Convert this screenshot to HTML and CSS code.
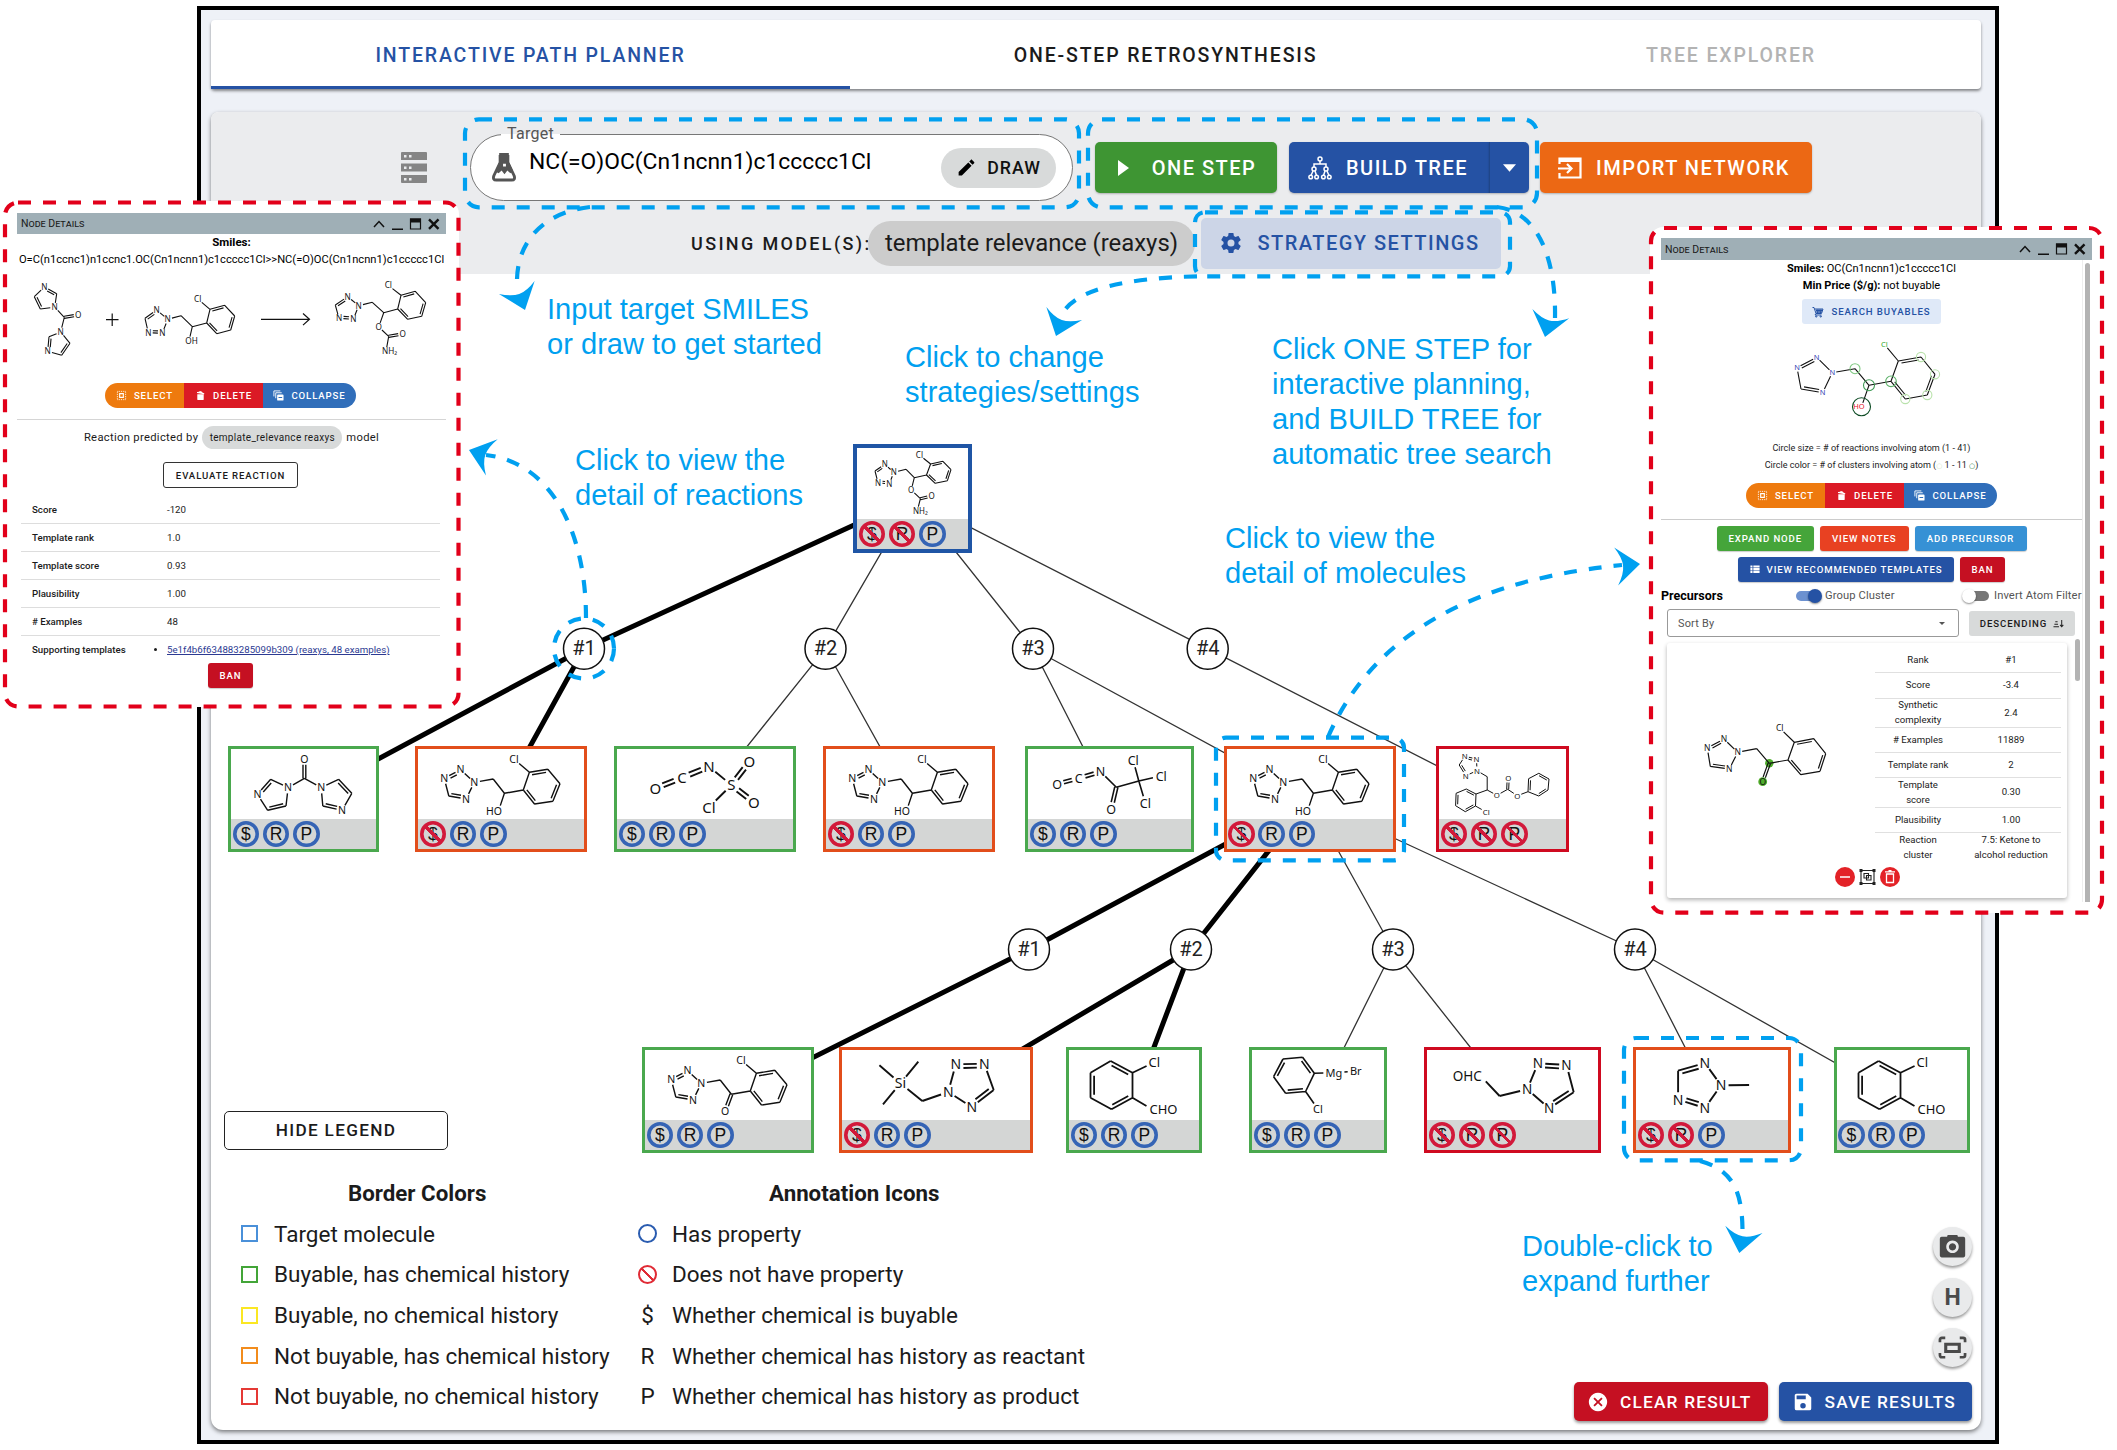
FILE: index.html
```html
<!DOCTYPE html>
<html lang="en">
<head>
<meta charset="utf-8">
<title>Interactive Path Planner</title>
<link rel="stylesheet" href="styles.css">
</head>
<body>
<svg class="defs" width="0" height="0">
  <symbol id="i-select" viewBox="0 0 24 24"><path d="M3 3h18v18H3z" fill="none" stroke="currentColor" stroke-width="2" stroke-dasharray="2 2"/><path d="M8 8h8v8H8z" fill="none" stroke="currentColor" stroke-width="2.4"/></symbol>
  <symbol id="i-trash" viewBox="0 0 24 24"><path d="M5 9h14v11a2 2 0 0 1-2 2H7a2 2 0 0 1-2-2zM4.500 4.500l4.500-.8 1.500-1.500 4 .9 1 1.900 5 2.500-.6 1.700L4.200 6.300z" fill="currentColor"/></symbol>
  <symbol id="i-collapse" viewBox="0 0 24 24"><path d="M2 14V2h14M6 18V6h13" fill="none" stroke="currentColor" stroke-width="2"/><path fill-rule="evenodd" fill="currentColor" d="M11 10h10a2 2 0 0 1 2 2v9a2 2 0 0 1-2 2H11a2 2 0 0 1-2-2v-9a2 2 0 0 1 2-2zm1 5.500v2h8v-2z"/></symbol>
  <symbol id="i-window" viewBox="0 0 70 14"><path d="M2 10l5-5.500 5 5.500M20 12.200h11" fill="none" stroke="#111" stroke-width="1.500"/><path d="M38.500 2h10v10h-10z" fill="none" stroke="#111" stroke-width="1.200"/><path d="M38 1.500h11v4H38z" fill="#111"/><path d="M57 2.300l9.500 9.500M66.500 2.300L57 11.800" stroke="#111" stroke-width="2.400"/></symbol>
  <symbol id="i-head" viewBox="-20 -26 40 27" overflow="visible"><path d="M0 0L-19-24Q-8-17 0-17Q8-17 19-24Z" fill="#00a0f0"/></symbol>
</svg>

<main class="figure">
  <section class="app">
    <nav class="tabs">
      <a class="tab tab-plan">INTERACTIVE PATH PLANNER</a>
      <a class="tab tab-step">ONE-STEP RETROSYNTHESIS</a>
      <a class="tab tab-tree">TREE EXPLORER</a>
    </nav>
    <div class="card">
      <header class="toolbar">
        <div class="bar-main">
          <svg class="server" viewBox="0 0 26 32"><path fill-rule="evenodd" fill="#858585" d="M1 0h24a1 1 0 0 1 1 1v7H0V1a1 1 0 0 1 1-1zm2 3v2.500h2.500V3zm5 0v2.500h2.500V3zM0 11.500h26v8H0zm3 3V17h2.500v-2.500zm5 0V17h2.500v-2.500zM0 23h26v7a1 1 0 0 1-1 1H1a1 1 0 0 1-1-1zm3 3v2.500h2.500V26zm5 0v2.500h2.500V26z"/></svg>
          <div class="target">
            <span class="target-label">Target</span>
            <svg class="flask" viewBox="0 0 26 30"><path d="M9 2v8L2.500 23.500Q1 28 5 28h16q4 0 2.500-4.500L17 10V2" fill="none" stroke="#555" stroke-width="3"/><path fill-rule="evenodd" fill="#555" d="M8 0h10v9l4.500 9.500-3 2.500-3-3-3 4-3-4-3 3-3-1.500L8 9zm4 11v3h3v-3z"/></svg>
            <span class="smiles">NC(=O)OC(Cn1ncnn1)c1ccccc1Cl</span>
            <button class="draw"><svg viewBox="0 0 24 24"><path d="M20.710 7.040C21.100 6.650 21.100 6 20.710 5.630L18.370 3.290C18 2.900 17.350 2.900 16.960 3.290L15.120 5.120L18.870 8.870M3 17.250V21H6.750L17.810 9.930L14.060 6.180Z"/></svg><span>DRAW</span></button>
          </div>
          <button class="btn one"><svg viewBox="0 0 24 24"><path fill="#fff" d="M7 4v16l11-8z"/></svg><span>ONE STEP</span></button>
          <button class="btn build"><svg viewBox="0 0 24 24" fill="none" stroke="#fff" stroke-width="1.500"><circle cx="12" cy="3" r="2"/><circle cx="6" cy="13" r="2"/><circle cx="18" cy="13" r="2"/><circle cx="2.700" cy="21" r="1.800"/><circle cx="8.600" cy="21" r="1.800"/><circle cx="15.400" cy="21" r="1.800"/><circle cx="21.300" cy="21" r="1.800"/><path d="M12 5v3M6 11V8h12v3M5 15l-2 4.500M7 15l1.500 4.500M17 15l-1.500 4.500M19 15l2 4.500"/></svg><span>BUILD TREE</span></button>
          <button class="btn drop"><svg viewBox="0 0 14 8"><path fill="#fff" d="M0 0h14L7 8z"/></svg></button>
          <button class="btn import"><svg viewBox="0 0 24 22" fill="none" stroke="#fff"><path stroke-width="2.200" d="M1.500 7V1.500h21v19h-21V16"/><path stroke-width="4" d="M1 3h22"/><path stroke-width="2.200" d="M0 11.500h13M9 7l4.500 4.500L9 16"/></svg><span>IMPORT NETWORK</span></button>
        </div>
        <div class="bar-model">
          <span class="using">USING MODEL(S):</span>
          <span class="chip">template relevance (reaxys)</span>
          <button class="strategy"><svg viewBox="0 0 24 24"><path fill="#2552a4" fill-rule="evenodd" d="M12 15.500A3.500 3.500 0 0 1 8.500 12A3.500 3.500 0 0 1 12 8.500A3.500 3.500 0 0 1 15.500 12A3.500 3.500 0 0 1 12 15.500M19.430 12.970C19.470 12.650 19.500 12.330 19.500 12C19.500 11.670 19.470 11.340 19.430 11L21.540 9.370C21.730 9.220 21.780 8.950 21.660 8.730L19.660 5.270C19.540 5.050 19.270 4.960 19.050 5.050L16.560 6.050C16.040 5.660 15.500 5.320 14.870 5.070L14.500 2.420C14.460 2.180 14.250 2 14 2H10C9.750 2 9.540 2.180 9.500 2.420L9.130 5.070C8.500 5.320 7.960 5.660 7.440 6.050L4.950 5.050C4.730 4.960 4.460 5.050 4.340 5.270L2.340 8.730C2.210 8.950 2.270 9.220 2.460 9.370L4.570 11C4.530 11.340 4.500 11.670 4.500 12C4.500 12.330 4.530 12.650 4.570 12.970L2.460 14.630C2.270 14.780 2.210 15.050 2.340 15.270L4.340 18.730C4.460 18.950 4.730 19.030 4.950 18.950L7.440 17.940C7.960 18.340 8.500 18.680 9.130 18.930L9.500 21.580C9.540 21.820 9.750 22 10 22H14C14.250 22 14.460 21.820 14.500 21.580L14.870 18.930C15.500 18.670 16.040 18.340 16.560 17.940L19.050 18.950C19.270 19.030 19.540 18.950 19.660 18.730L21.660 15.270C21.780 15.050 21.730 14.780 21.540 14.630Z"/></svg><span>STRATEGY SETTINGS</span></button>
        </div>
      </header>
      <footer class="bottom">
        <div class="legend">
          <button class="hide">HIDE LEGEND</button>
          <div class="legend-cols">
            <div class="lcol lcol-a">
              <h2>Border Colors</h2>
              <p><i class="sq c-blue"></i>Target molecule</p>
              <p><i class="sq c-green"></i>Buyable, has chemical history</p>
              <p><i class="sq c-yellow"></i>Buyable, no chemical history</p>
              <p><i class="sq c-orange"></i>Not buyable, has chemical history</p>
              <p><i class="sq c-red"></i>Not buyable, no chemical history</p>
            </div>
            <div class="lcol lcol-b">
              <h2>Annotation Icons</h2>
              <p><i class="ring"></i>Has property</p>
              <p><i class="ring no"></i>Does not have property</p>
              <p><b>$</b>Whether chemical is buyable</p>
              <p><b>R</b>Whether chemical has history as reactant</p>
              <p><b>P</b>Whether chemical has history as product</p>
            </div>
          </div>
        </div>
        <div class="actions">
          <div class="fabs">
            <button class="fab"><svg viewBox="0 0 24 24"><path fill="#4a4a4a" fill-rule="evenodd" d="M3 4h4.500L8 2.500h8l.5 1.500H21a1.500 1.500 0 0 1 1.500 1.500v14A1.500 1.500 0 0 1 21 21H3a1.500 1.500 0 0 1-1.500-1.500v-14A1.500 1.500 0 0 1 3 4zm9 3a5.200 5.200 0 1 0 .001 0zm0 2.300a3 3 0 1 1-.001 0z"/></svg></button>
            <button class="fab">H</button>
            <button class="fab"><svg viewBox="0 0 30 24" fill="none" stroke="#4a4a4a" stroke-width="2.800"><path d="M2 6.500V4q0-2 2-2h3.500M22.500 2H26q2 0 2 2v2.500M28 17.500V20q0 2-2 2h-3.500M7.500 22H4q-2 0-2-2v-2.500"/><path stroke-width="3.200" d="M8 8.500h14v7.500H8z"/></svg></button>
          </div>
          <div class="result">
            <button class="rbtn clear"><svg viewBox="0 0 24 24"><path fill="#fff" fill-rule="evenodd" d="M12 2A10 10 0 1 0 12.001 2zM15.590 7L12 10.590L8.410 7L7 8.410L10.590 12L7 15.590L8.410 17L12 13.410L15.590 17L17 15.590L13.410 12L17 8.410Z"/></svg><span>CLEAR RESULT</span></button>
            <button class="rbtn save"><svg viewBox="0 0 24 24"><path fill="#fff" fill-rule="evenodd" d="M15 9H5V5H15M12 19A3 3 0 0 1 9 16A3 3 0 0 1 12 13A3 3 0 0 1 15 16A3 3 0 0 1 12 19M17 3H5C3.890 3 3 3.900 3 5V19A2 2 0 0 0 5 21H19A2 2 0 0 0 21 19V7L17 3Z"/></svg><span>SAVE RESULTS</span></button>
          </div>
        </div>
      </footer>
    </div>
  </section>

  <svg class="layer" viewBox="0 0 2117 1450">
    <g stroke="#333" stroke-width="1.300">
      <path d="M913 498L825.500 648.700M913 498L1033 648.700M913 498L1207.700 648.700M825.500 648.700L705 799M825.500 648.700L909 799M1033 648.700L1109.500 799M1033 648.700L1309.500 799M1207.700 648.700L1502 799M1309.500 799L1393 949.500M1309.500 799L1635 949.500M1393 949.500L1318 1100M1393 949.500L1512 1100M1635 949.500L1712 1100M1635 949.500L1901 1100"/>
    </g>
    <path stroke="#000" stroke-width="5" d="M913 498L584 648.700M584 648.700L303.500 799M584 648.700L501 799M1309.500 799L1029 949.500M1309.500 799L1191 949.500M1029 949.500L728 1100M1191 949.500L936 1100M1191 949.500L1134 1100"/>
    <g class="rxn">
      <circle cx="584" cy="648.700" r="20.500"/><text x="584" y="655">#1</text>
      <circle cx="825.500" cy="648.700" r="20.500"/><text x="825.500" y="655">#2</text>
      <circle cx="1033" cy="648.700" r="20.500"/><text x="1033" y="655">#3</text>
      <circle cx="1207.700" cy="648.700" r="20.500"/><text x="1207.700" y="655">#4</text>
      <circle cx="1029" cy="949.500" r="20.500"/><text x="1029" y="955.500">#1</text>
      <circle cx="1191" cy="949.500" r="20.500"/><text x="1191" y="955.500">#2</text>
      <circle cx="1393" cy="949.500" r="20.500"/><text x="1393" y="955.500">#3</text>
      <circle cx="1635" cy="949.500" r="20.500"/><text x="1635" y="955.500">#4</text>
    </g>
  </svg>

  <div class="node root"><svg data-mol="target" viewBox="857 448 111 71"></svg><div class="marks"><i class="n">$</i><i class="n">R</i><i>P</i></div></div>

  <div class="node green n1"><svg data-mol="cdi" viewBox="231 749 145 70"></svg><div class="marks"><i>$</i><i>R</i><i>P</i></div></div>
  <div class="node orange n2"><svg data-mol="alcohol" viewBox="418 749 166 70"></svg><div class="marks"><i class="n">$</i><i>R</i><i>P</i></div></div>
  <div class="node green n3"><svg data-mol="csi" viewBox="617 749 176 70"></svg><div class="marks"><i>$</i><i>R</i><i>P</i></div></div>
  <div class="node orange n4"><svg data-mol="alcohol" viewBox="418 749 166 70"></svg><div class="marks"><i class="n">$</i><i>R</i><i>P</i></div></div>
  <div class="node green n5"><svg data-mol="tcai" viewBox="1028.500 749 162 70"></svg><div class="marks"><i>$</i><i>R</i><i>P</i></div></div>
  <div class="node orange n6"><svg data-mol="alcohol" viewBox="418 749 166 70"></svg><div class="marks"><i class="n">$</i><i>R</i><i>P</i></div></div>
  <div class="node red n7"><svg data-mol="carbonate" viewBox="1439 749 127 70"></svg><div class="marks"><i class="n">$</i><i class="n">R</i><i class="n">P</i></div></div>

  <div class="node green m1"><svg data-mol="ketone" viewBox="418 749 166 70"></svg><div class="marks"><i>$</i><i>R</i><i>P</i></div></div>
  <div class="node orange m2"><svg data-mol="silyl" viewBox="842 1050 187 70"></svg><div class="marks"><i class="n">$</i><i>R</i><i>P</i></div></div>
  <div class="node green m3"><svg data-mol="aldehyde" viewBox="1069 1050 130 70"></svg><div class="marks"><i>$</i><i>R</i><i>P</i></div></div>
  <div class="node green m4"><svg data-mol="grignard" viewBox="1252 1050 132 70"></svg><div class="marks"><i>$</i><i>R</i><i>P</i></div></div>
  <div class="node red m5"><svg data-mol="ohc" viewBox="1427 1050 171 70"></svg><div class="marks"><i class="n">$</i><i class="n">R</i><i class="n">P</i></div></div>
  <div class="node orange m6"><svg data-mol="metet" viewBox="1636.500 1050 151 70"></svg><div class="marks"><i class="n">$</i><i class="n">R</i><i>P</i></div></div>
  <div class="node green m7"><svg data-mol="aldehyde" viewBox="1069 1050 130 70"></svg><div class="marks"><i>$</i><i>R</i><i>P</i></div></div>

  <aside class="win win-rxn">
    <div class="win-body">
      <div class="win-head"><span>Node Details</span><svg viewBox="0 0 70 14"><use href="#i-window"/></svg></div>
      <p class="w-smi"><b>Smiles:</b></p>
      <p class="w-smi long">O=C(n1ccnc1)n1ccnc1.OC(Cn1ncnn1)c1ccccc1Cl&gt;&gt;NC(=O)OC(Cn1ncnn1)c1ccccc1Cl</p>
      <svg class="scheme" data-mol="rcdi ralc rprod" viewBox="17 268 429 115"><path d="M106 319.700h12.500M112.200 313.500V326M261 319.300h48M303 313.500l6.500 5.800-6.500 5.800" fill="none" stroke="#111" stroke-width="1.200"/></svg>
      <div class="tri"><button class="t-sel"><svg><use href="#i-select"/></svg>SELECT</button><button class="t-del"><svg><use href="#i-trash"/></svg>DELETE</button><button class="t-col"><svg><use href="#i-collapse"/></svg>COLLAPSE</button></div>
      <div class="predicted"><span>Reaction predicted by</span><em>template_relevance reaxys</em><span>model</span></div>
      <button class="evaluate">EVALUATE REACTION</button>
      <dl class="stats">
        <div><dt>Score</dt><dd>-120</dd></div>
        <div><dt>Template rank</dt><dd>1.0</dd></div>
        <div><dt>Template score</dt><dd>0.93</dd></div>
        <div><dt>Plausibility</dt><dd>1.00</dd></div>
        <div><dt># Examples</dt><dd>48</dd></div>
        <div><dt>Supporting templates</dt><dd class="li"><a>5e1f4b6f634883285099b309 (reaxys, 48 examples)</a></dd></div>
      </dl>
      <button class="sbtn ban">BAN</button>
    </div>
  </aside>

  <aside class="win win-mol">
    <div class="win-body">
      <div class="win-head"><span>Node Details</span><svg viewBox="0 0 70 14"><use href="#i-window"/></svg></div>
      <div class="scroller">
        <div class="content">
          <p class="w-smi"><b>Smiles:</b> OC(Cn1ncnn1)c1ccccc1Cl</p>
          <p class="w-smi"><b>Min Price ($/g):</b> not buyable</p>
          <button class="search"><svg viewBox="0 0 24 24" fill="none" stroke="#2552a4" stroke-width="2"><path d="M1 3h3l4 12h11l3-9H6M8 9h13M8 12h12M10 6l1 8M14 6v8M18 6l-1 8M8 15l-2 3h13"/><circle cx="8.500" cy="21" r="1.300"/><circle cx="17.500" cy="21" r="1.300"/></svg>SEARCH BUYABLES</button>
          <svg class="atoms" data-mol="atoms" viewBox="1661 324 422 116"></svg>
          <p class="w-note">Circle size = # of reactions involving atom (1 - 41)</p>
          <p class="w-note">Circle color = # of clusters involving atom (<span class="lo">○</span> 1 - 11 <span class="hi">○</span>)</p>
          <div class="tri"><button class="t-sel"><svg><use href="#i-select"/></svg>SELECT</button><button class="t-del"><svg><use href="#i-trash"/></svg>DELETE</button><button class="t-col"><svg><use href="#i-collapse"/></svg>COLLAPSE</button></div>
          <hr>
          <div class="srow"><button class="sbtn g">EXPAND NODE</button><button class="sbtn o">VIEW NOTES</button><button class="sbtn a">ADD PRECURSOR</button></div>
          <div class="srow"><button class="sbtn r"><svg viewBox="0 0 24 20"><path fill="#fff" d="M1 1h5v5H1zm7 0h15v5H8zM1 7.500h5v5H1zm7 0h15v5H8zM1 14h5v5H1zm7 0h15v5H8z"/></svg>VIEW RECOMMENDED TEMPLATES</button><button class="sbtn ban">BAN</button></div>
          <div class="prec"><b>Precursors</b><i class="tog on"></i><span class="gc">Group Cluster</span><i class="tog"></i><span>Invert Atom Filter</span></div>
          <div class="sort"><div class="select"><span>Sort By</span><i></i></div><button>DESCENDING<svg viewBox="0 0 24 20" fill="none" stroke="#222" stroke-width="2.200"><path d="M1 17h12M3 11.500h8M5 6h5M19 2v14M15.500 13l3.500 4 3.500-4"/></svg></button></div>
          <div class="prow">
            <div class="pcard">
              <div class="pmain">
                <svg data-mol="green" viewBox="1667 648 208 214"></svg>
                <dl>
                  <div><dt>Rank</dt><dd>#1</dd></div>
                  <div><dt>Score</dt><dd>-3.4</dd></div>
                  <div class="two"><dt>Synthetic complexity</dt><dd>2.4</dd></div>
                  <div><dt># Examples</dt><dd>11889</dd></div>
                  <div><dt>Template rank</dt><dd>2</dd></div>
                  <div class="two"><dt>Template<br>score</dt><dd>0.30</dd></div>
                  <div><dt>Plausibility</dt><dd>1.00</dd></div>
                  <div class="two"><dt>Reaction<br>cluster</dt><dd>7.5: Ketone to alcohol reduction</dd></div>
                </dl>
              </div>
              <svg class="picons" viewBox="0 0 66 22"><circle cx="11" cy="11" r="10" fill="#e32227"/><path d="M6 11h10" stroke="#fff" stroke-width="1.500"/><g fill="none" stroke="#222" stroke-width="1.100"><path d="M27 4.500h13v13H27z"/><path d="M30 7.500h4.500v4.500H30zM32.500 9.500H37V14h-4.500z"/></g><path fill="#222" d="M25.500 3h3v3h-3zM38.500 3h3v3h-3zM25.500 16h3v3h-3zM38.500 16h3v3h-3z"/><circle cx="56" cy="11" r="10" fill="#e32227"/><path d="M52.500 8h7v8.500h-7zM51 5.800h10M54.500 4.700h3" fill="none" stroke="#fff" stroke-width="1.300"/></svg>
            </div>
            <i class="thumb"></i>
          </div>
        </div>
        <i class="bar"></i>
      </div>
    </div>
  </aside>

  <svg class="layer" viewBox="0 0 2117 1450">
    <g fill="none" stroke="#e2001a" stroke-width="4.200" stroke-dasharray="13 12">
      <rect x="5" y="202.500" width="453.500" height="504" rx="13"/>
      <rect x="1651" y="228" width="451" height="684.700" rx="13"/>
    </g>
    <g fill="none" stroke="#00a0f0" stroke-width="4.200" stroke-dasharray="13 12">
      <rect x="465" y="119.300" width="614" height="88" rx="14"/>
      <rect x="1088" y="119.300" width="449" height="88" rx="14"/>
      <rect x="1195" y="212.300" width="315" height="64" rx="10"/>
      <circle cx="584" cy="648.500" r="30"/>
      <rect x="1216" y="737.700" width="188" height="122.600" rx="10"/>
      <rect x="1624" y="1038" width="177" height="122.300" rx="12"/>
      <path d="M590 207C545 212 516 240 517 284"/>
      <path d="M1197 276.300C1130 278 1072 288 1060 318"/>
      <path d="M1497 207C1540 212 1556 262 1555 318"/>
      <path d="M586 618C586 530 550 462 486 455"/>
      <path d="M1328 737C1366 650 1450 582 1622 565"/>
      <path d="M1700 1161C1735 1170 1743 1195 1742.500 1236"/>
    </g>
    <use href="#i-head" x="-20" y="-26" width="40" height="27" transform="translate(525 310) rotate(-20)"/>
    <use href="#i-head" x="-20" y="-26" width="40" height="27" transform="translate(1056 336) rotate(20)"/>
    <use href="#i-head" x="-20" y="-26" width="40" height="27" transform="translate(1545 337) rotate(14)"/>
    <use href="#i-head" x="-20" y="-26" width="40" height="27" transform="translate(469 450) rotate(108)"/>
    <use href="#i-head" x="-20" y="-26" width="40" height="27" transform="translate(1640 564) rotate(-96)"/>
    <use href="#i-head" x="-20" y="-26" width="40" height="27" transform="translate(1739.300 1253) rotate(11)"/>
  </svg>
  <p class="note k1">Input target SMILES<br>or draw to get started</p>
  <p class="note k2">Click to change<br>strategies/settings</p>
  <p class="note k3">Click ONE STEP for<br>interactive planning,<br>and BUILD TREE for<br>automatic tree search</p>
  <p class="note k4">Click to view the<br>detail of reactions</p>
  <p class="note k5">Click to view the<br>detail of molecules</p>
  <p class="note k6">Double-click to<br>expand further</p>
</main>
<script src="molecules.js"></script>
</body>
</html>
```
FILE: molecules.js
```js
// Skeletal formulas. Atoms: "x,y[,label[,label shift]]". Bonds: "a-b" single, "a=b" double.
const SCAFFOLD = '0=1 1-2 2-3 3=4 4-0 2-5 5-6 6-7 7-8 8=9 9-10 10=11 11-12 12=7 8-13 ';
const SCAFFOLD_2H = '4=0 0-1 1-2 2=3 3-4 1-5 5-6 6-7 7-8 8=9 9-10 10=11 11-12 12=7 8-13 ';
const CDI = '0=1 1-2 2-3 3=4 4-0 2-5 5=6 5-7 7-8 8=9 9-10 10=11 11-7';
const CORE = '444.2,778.3,N 460.5,769.7,N 474.3,782.3,N 466.1,799,N 448.8,796 493.2,779 504.4,793.3 523.3,790 529.4,772.3 547.8,769.3 560,783.7 552.9,801.3 534.5,804 514,759,Cl ';

const MOLS = {
  target: { fs: 8, w: 1.1, gap: 2, a: '884.7,464.3,N 893.9,472.3,N 889.3,483.7,N 878.1,483,N 875,471 906.1,469.3 914.3,477.7 926.5,475 930.6,464 942.9,461.3 951,469.7 947.4,480.7 935.2,483.3 919.4,455,Cl 911.2,490,O 920.4,498.7 931.6,496,O 917.3,510.7,NH₂,3', b: SCAFFOLD_2H + '6-14 14-15 15=16 15-17' },
  cdi: { fs: 10.5, a: '257.4,794.3,N 270.7,779.3 288.1,787.7,N 286,806 267.7,810.3 304.4,778.3 304.4,759,O 321.2,787.7,N 338.6,779.3 351.8,793.3 342.1,810.3,N 322.8,806', b: CDI },
  alcohol: { fs: 10.5, a: CORE + '498.5,811,HO,-4.5', b: SCAFFOLD + '6-14' },
  ketone: { fs: 10.5, a: CORE + '498.1,810,O', b: SCAFFOLD + '6=14' },
  csi: { fs: 15, w: 1.9, gap: 4.2, a: '655.4,788.3,O 681.9,777.7,C 709,766.7,N 731.4,785,S 749.3,762,O 753.9,802.3,O 709,807.3,Cl', b: '0=1 1=2 2-3 3=4 3=5 3-6' },
  tcai: { fs: 12.5, w: 1.6, gap: 3.2, a: '1057.1,784,O 1078.6,778.3,C 1100.5,771.7,N 1116.3,787.3 1111.2,809,O 1138.8,781 1133.2,760.3,Cl 1161.2,776,Cl 1145.4,803.3,Cl', b: '0=1 1=2 2-3 3=4 3-5 5-6 5-7 5-8' },
  carbonate: { fs: 7.8, w: 1, gap: 2, a: '1464.8,756.3,N 1476.5,759,N 1477,770.7,N 1465.8,775.7,N 1459.2,765 1487.2,776.7 1487.2,790 1476,794 1466.3,789 1456.1,793.3 1455.6,805.7 1465.3,811.7 1475.5,806 1486.2,812,Cl 1496.9,795.3,O 1507.7,789.3 1508.2,778.3,O 1517.3,795.7,O 1528,791.7 1528.6,778.7 1538.8,773.3 1549,779 1548,790 1538.8,796', b: '0=1 1-2 2-3 3=4 4-0 2-5 5-6 6-7 7=8 8-9 9=10 10-11 11=12 12-7 12-13 6-14 14-15 15=16 15-17 17-18 18=19 19-20 20=21 21-22 22=23 23-18' },
  silyl: { fs: 14, w: 1.9, gap: 3.8, a: '899.9,1083.3,Si 878.9,1065.3 917.8,1061.7 882.5,1104.3 921.8,1101 947.7,1092,N 955.3,1064.3,N 983.8,1063.7,N 993.2,1090 971.3,1107,N', b: '0-1 0-2 0-3 0-4 4-5 5-6 6=7 7-8 8=9 9-5' },
  aldehyde: { fs: 13, w: 1.8, gap: 3.6, a: '1110.6,1061 1132.5,1072.7 1132.5,1097.7 1111.5,1109.3 1090.5,1097.7 1090.5,1072.7 1154.4,1062.3,Cl 1152.5,1109.7,CHO,11', b: '0=1 1-2 2=3 3-4 4=5 5-0 1-6 2-7' },
  grignard: { fs: 11, w: 1.6, gap: 3, a: '1273.6,1076.7 1283,1059 1302.6,1057.3 1314.3,1073.3 1305.6,1091.5 1285.6,1093.3 1333.9,1072.7,Mg 1355.8,1071.3,Br 1317.9,1109,Cl', b: '0=1 1-2 2=3 3-4 4=5 5-0 3-6 6-7 4-8' },
  ohc: { fs: 13.5, w: 1.9, gap: 3.8, a: '1480.8,1076,OHC,-13.5 1499.6,1096 1527.2,1089.3,N 1538,1063.3,N 1566.5,1065,N 1573.7,1092.3 1549.1,1108.3,N', b: '0-1 1-2 2-3 3=4 4-5 5=6 6-2' },
  metet: { fs: 14, w: 1.9, gap: 3.8, a: '1704.9,1063,N 1721,1085.3,N 1704.9,1108,N 1678.1,1099.7,N 1678.1,1070.7 1749.1,1085', b: '4=0 0-1 1-2 2=3 3-4 1-5' },
  rcdi: { fs: 8.2, w: 1.1, gap: 2.2, a: '44.3,287,N 56.7,293.7 54.7,307.3,N 40.3,309 34.3,296.7 64.3,317.3 78.3,315,O 60.7,332,N 70,343.3 61.7,355.3 47.7,351.3,N 49,336.7', b: CDI },
  ralc: { fs: 8.2, w: 1.1, gap: 2.2, a: '156.7,310,N 167.7,319.3,N 162.3,333.3,N 148.3,332.7,N 145,318.3 181,315.7 192.3,326.7 206.7,323 210,309.3 224.7,305.3 234.7,316 230.7,330 216.7,333.7 197.7,299,Cl 189,341,OH,2.5', b: SCAFFOLD_2H + '6-14' },
  rprod: { fs: 8.2, w: 1.1, gap: 2.2, a: '347.7,296.7,N 358.7,305.7,N 353.3,319.3,N 339,318.3,N 335.3,305 372.3,302.3 383.7,312.7 397.7,309 401,295.3 415.3,291.3 425.7,302.7 421.7,316.3 407.7,319.3 388.3,285.3,Cl 378.7,327,O 388.7,336.3 402.7,334,O 386,351.5,NH₂,3.5', b: SCAFFOLD_2H + '6-14 14-15 15=16 15-17' },
  atoms: { fs: 7.5, w: 1.1, gap: 2.6, tint: { N: '#3340b0', Cl: '#2fa82f', HO: '#e8112a' },
    rings: [[5, 5, '#7fc982'], [6, 5.5, '#3f9a55'], [7, 5.3, '#5cb168'], [9, 4.6, '#b9e2ab'], [10, 4.6, '#b9e2ab'], [11, 4.6, '#b9e2ab'], [12, 4.6, '#b9e2ab'], [14, 9, '#0b4a22']],
    a: '1797,367.7,N 1816.7,357.3,N 1832.3,372.7,N 1822.7,392.7,N 1801,389 1855,368.7 1869,385.3 1891,381.3 1898.3,361 1921,357 1935,374.3 1927.3,395 1905.3,399 1884.3,344.3,Cl 1861.5,406.7,HO,-2.5', b: SCAFFOLD + '6-14' },
  green: { fs: 8.5, w: 1.2, gap: 2.4, discs: [[6, 4.2], [14, 4.4]],
    a: '1707.3,748,N 1724,739,N 1737.7,752.3,N 1729.3,769,N 1710.3,766.3 1756.7,748.7 1769.3,763.3 1788,760 1794.3,742.3 1813.7,738.7 1825.7,753.7 1820,771.3 1800.7,774.7 1779.7,728,Cl 1762.7,781.7,O', b: SCAFFOLD + '6=14' },
};

const NS = 'http://www.w3.org/2000/svg';
const WIDE = { Mg: 0.42, Br: 0.2, Cl: 0.14, Si: 0.14 };
const add = (svg, tag, attrs, text) => {
  const el = document.createElementNS(NS, tag);
  for (const k in attrs) el.setAttribute(k, attrs[k]);
  if (text) el.textContent = text;
  svg.appendChild(el);
};

// Atoms of the smallest ring that holds bond i-j, or null for a chain bond.
function ringOf(bonds, i, j) {
  const queue = [[i]], seen = new Set([i]);
  while (queue.length) {
    const path = queue.shift(), last = path[path.length - 1];
    for (const [a, b] of bonds) {
      if ((a === i && b === j) || (a === j && b === i)) continue;
      const next = a === last ? b : b === last ? a : -1;
      if (next < 0 || seen.has(next)) continue;
      if (next === j) return [...path, j];
      seen.add(next);
      queue.push([...path, next]);
    }
  }
  return null;
}

function draw(svg, m) {
  const atoms = m.a.trim().split(' ').map(s => {
    const [x, y, label, shift] = s.split(',');
    return { x: +x, y: +y, label, shift: +(shift || 0) };
  });
  const bonds = m.b.trim().split(' ').map(s => [...s.split(/[-=]/).map(Number), s.includes('=')]);
  const gap = m.gap || 2.8;
  (m.discs || []).forEach(([i, r]) => add(svg, 'circle', { cx: atoms[i].x, cy: atoms[i].y, r, fill: '#4fae2c' }));
  let d = '';
  for (const [i, j, dbl] of bonds) {
    const p = atoms[i], q = atoms[j];
    const len = Math.hypot(q.x - p.x, q.y - p.y), ux = (q.x - p.x) / len, uy = (q.y - p.y) / len;
    const trim = t => !t.label ? 0 : m.fs * (0.54 + (WIDE[t.label] || 0) * Math.abs(ux));
    const s = trim(p), e = len - trim(q);
    const seg = (off, a, b) => {
      const ox = -uy * off, oy = ux * off;
      d += `M${(p.x + ux * a + ox).toFixed(2)} ${(p.y + uy * a + oy).toFixed(2)}L${(p.x + ux * b + ox).toFixed(2)} ${(p.y + uy * b + oy).toFixed(2)}`;
    };
    if (!dbl) { seg(0, s, e); continue; }
    const ring = ringOf(bonds, i, j);
    if (!ring) { seg(gap / 2, s, e); seg(-gap / 2, s, e); continue; }
    const cx = ring.reduce((t, k) => t + atoms[k].x, 0) / ring.length;
    const cy = ring.reduce((t, k) => t + atoms[k].y, 0) / ring.length;
    const side = Math.sign(-uy * (cx - p.x) + ux * (cy - p.y));
    seg(0, s, e);
    seg(side * gap, Math.max(s, len * 0.12), Math.min(e, len * 0.88));
  }
  add(svg, 'path', { d, fill: 'none', stroke: '#111', 'stroke-width': m.w || 1.4 });
  (m.rings || []).forEach(([i, r, c]) => add(svg, 'circle', { cx: atoms[i].x, cy: atoms[i].y, r, fill: 'none', stroke: c, 'stroke-width': 1.1 }));
  atoms.filter(t => t.label).forEach(t => add(svg, 'text', {
    x: t.x + t.shift, y: t.y + m.fs * 0.36, 'font-size': m.fs, 'text-anchor': 'middle', fill: (m.tint || {})[t.label] || '#111',
  }, t.label));
}

document.querySelectorAll('[data-mol]').forEach(svg =>
  svg.dataset.mol.split(' ').forEach(name => draw(svg, MOLS[name])));
```
FILE: styles.css
```css
* { box-sizing: border-box; }
body { margin: 0; background: #fff; font-family: Roboto, "Liberation Sans", sans-serif; color: #1b1b1b; }
p, h2, dl, dd { margin: 0; }
button { border: 0; padding: 0; margin: 0; background: none; font-family: inherit; color: inherit; display: flex; align-items: center; justify-content: center; white-space: nowrap; }
.defs { position: absolute; }
.figure { position: relative; width: 2117px; height: 1450px; overflow: hidden; }
.layer { position: absolute; left: 0; top: 0; width: 2117px; height: 1450px; }
[data-mol] text { font-family: "Noto Sans", sans-serif; }

.app { position: absolute; left: 197px; top: 6px; width: 1802px; height: 1438px; border: 4px solid #000; background: #eef1f7; padding: 10px 14px 0 10px; }
.tabs { display: flex; height: 69px; background: #fff; box-shadow: 0 2px 3px rgba(0,0,0,.45); border-radius: 4px; }
.tab { display: flex; align-items: center; justify-content: center; font-size: 19.500px; font-weight: 500; letter-spacing: 1.850px; padding-top: 2px; }
.tab-plan { width: 639px; color: #2552a4; border-bottom: 3px solid #2552a4; padding-top: 5px; }
.tab-step { width: 631px; }
.tab-tree { flex: 1; color: #b3b3b3; }

.card { display: flex; flex-direction: column; justify-content: space-between; margin-top: 23px; height: 1318px; background: #fff; border-radius: 8px 8px 12px 12px; box-shadow: 0 2px 4px rgba(0,0,0,.5); }
.toolbar { height: 162px; background: #ebecee; border-radius: 8px 8px 0 0; padding: 22px 0 0 190px; }
.bar-main { display: flex; align-items: center; height: 67px; }
.server { width: 26px; height: 32px; margin-right: 43px; }
.target { position: relative; display: flex; align-items: center; width: 603px; height: 67px; border: 1px solid #777; border-radius: 34px; background: #fff; padding: 0 16px 0 20px; margin-right: 22px; }
.target-label { position: absolute; left: 30px; top: -11px; padding: 0 6px; font-size: 16px; line-height: 20px; color: #555; background: linear-gradient(#ebecee 50%, #fff 50%); letter-spacing: .3px; }
.flask { width: 26px; height: 29px; margin-right: 12px; }
.smiles { font-size: 22.850px; color: #000; flex: 1; padding-bottom: 12px; }
.draw { width: 115px; height: 40px; border-radius: 20px; background: #d8dada; font-size: 17.800px; font-weight: 500; letter-spacing: 1px; color: #111; }
.draw svg { width: 21px; margin-right: 10px; }
.btn { height: 51px; border-radius: 5px; color: #fff; font-size: 20px; font-weight: 500; letter-spacing: 1.500px; box-shadow: 0 1px 2px rgba(0,0,0,.25); }
.btn svg { width: 24px; height: 24px; margin-right: 14px; }
.one { width: 182px; background: #3e9533; margin-right: 12px; padding-right: 5px; }
.one svg { margin-right: 17px; }
.build { width: 200px; background: #2552a4; border-radius: 5px 0 0 5px; padding-right: 2px; }
.drop { width: 40px; background: #2552a4; border-radius: 0 5px 5px 0; border-left: 1px solid #1f4689; margin-right: 11px; }
.drop svg { width: 13px; height: 8px; margin: 0; }
.import { width: 272px; background: #ec6814; padding-right: 4px; }
.bar-model { display: flex; align-items: center; margin: 16px 0 0 290px; height: 52px; }
.using { width: 177px; font-size: 18px; font-weight: 500; letter-spacing: 2.350px; white-space: nowrap; }
.chip { width: 327px; height: 45px; line-height: 45px; border-radius: 23px; background: #ccc; text-align: center; font-size: 23.900px; white-space: nowrap; }
.strategy { width: 300px; height: 51px; margin-left: 6px; border-radius: 5px; background: #ccd5e7; color: #2552a4; font-size: 20px; font-weight: 500; letter-spacing: 1.480px; padding-right: 3px; }
.strategy svg { width: 24px; height: 24px; margin-right: 14px; }

.bottom { display: flex; justify-content: space-between; align-items: flex-end; }
.legend { padding: 0 0 13px 13px; }
.hide { width: 224px; height: 39px; border: 1px solid #222; border-radius: 5px; font-size: 17.200px; font-weight: 500; letter-spacing: 1.300px; }
.legend-cols { display: flex; padding-top: 23px; font-size: 22.500px; line-height: 40.700px; white-space: nowrap; }
.legend h2 { font-size: 22.300px; font-weight: 700; line-height: 40.700px; }
.lcol p { display: flex; align-items: center; height: 40.700px; }
.lcol-a { width: 414px; padding-left: 17px; }
.lcol-a h2 { padding-left: 107px; }
.lcol-b h2 { padding-left: 131px; }
.sq { width: 17px; height: 17px; border: 2px solid; margin-right: 16px; }
.c-blue { border-color: #4a90d9; } .c-green { border-color: #43a538; } .c-yellow { border-color: #fbe723; } .c-orange { border-color: #f28c1c; } .c-red { border-color: #e53935; }
.ring { width: 19px; height: 19px; border-radius: 50%; border: 2px solid #2a5cb0; margin-right: 15px; }
.ring.no { border-color: #e02b35; background: linear-gradient(45deg, transparent 45%, #e02b35 45%, #e02b35 56%, transparent 56%); }
.lcol b { width: 19px; margin-right: 15px; text-align: center; font-weight: 400; }
.actions { padding: 0 9px 9px 0; display: flex; flex-direction: column; align-items: flex-end; }
.fabs { display: flex; flex-direction: column; gap: 11.500px; margin: 0 0 15px; }
.fab { width: 39px; height: 39px; border-radius: 50%; background: #e9eaeb; box-shadow: 0 2px 3px rgba(0,0,0,.4); font-size: 23px; font-weight: 700; color: #4a4a4a; }
.fab svg { width: 29px; }
.result { display: flex; gap: 11px; }
.rbtn { width: 193.500px; height: 39px; border-radius: 5px; color: #fff; font-size: 17.300px; font-weight: 500; letter-spacing: 1.200px; box-shadow: 0 2px 3px rgba(0,0,0,.4); padding-right: 3px; }
.rbtn svg { width: 22px; margin-right: 11px; }
.clear { background: #c51022; } .save { background: #2552a4; }

.rxn circle { fill: #fff; stroke: #111; stroke-width: 1.500; }
.rxn text { font-size: 20px; text-anchor: middle; fill: #222; }
.node { position: absolute; height: 106px; border: 3px solid; background: #fff; display: flex; flex-direction: column; }
.node > svg { display: block; width: 100%; height: 70px; }
.marks { flex: 1; display: flex; align-items: center; gap: 3.800px; padding-left: 1.500px; background: #d4d6d5; }
.marks i { position: relative; width: 26.500px; height: 26.500px; box-shadow: inset 0 0 0 3.600px #3564b5; border-radius: 50%; display: flex; align-items: center; justify-content: center; font: 17.500px "Liberation Sans", Arial, sans-serif; color: #111; }
.marks .n { box-shadow: inset 0 0 0 3.600px #d2193a; }
.marks .n::after { content: ""; position: absolute; inset: 1px; border-radius: 50%; background: linear-gradient(45deg, transparent 45.500%, #d2193a 45.500%, #d2193a 54.500%, transparent 54.500%); }
.green { border-color: #4aa84e; } .orange { border-color: #e24e1b; } .red { border-color: #cf0a20; }
.root { left: 853px; top: 444px; width: 119px; height: 109px; border: 4px solid #1f55a5; }
.root > svg { height: 71px; }
.n1, .n2, .n3, .n4, .n5, .n6, .n7 { top: 746px; }
.n1 { left: 228px; width: 151px; } .n2 { left: 415px; width: 172px; } .n3 { left: 614px; width: 182px; } .n4 { left: 823px; width: 172px; }
.n5 { left: 1025px; width: 169px; } .n6 { left: 1223.500px; width: 172px; } .n7 { left: 1436px; width: 133px; }
.m1, .m2, .m3, .m4, .m5, .m6, .m7 { top: 1047px; }
.m1 { left: 642px; width: 172px; } .m2 { left: 839px; width: 194px; } .m3 { left: 1066px; width: 136px; } .m4 { left: 1249px; width: 138px; }
.m5 { left: 1424px; width: 177px; } .m6 { left: 1633px; width: 158px; } .m7 { left: 1833.500px; width: 136px; }

.note { position: absolute; font: 29.100px/35px "Liberation Sans", Arial, sans-serif; color: #00a0f0; white-space: nowrap; }
.k1 { left: 547px; top: 292px; } .k2 { left: 905px; top: 340px; } .k3 { left: 1272px; top: 332px; } .k4 { left: 575px; top: 443px; } .k5 { left: 1225px; top: 521px; } .k6 { left: 1522px; top: 1229px; }

.win { position: absolute; background: #fff; border-radius: 13px; }
.win-rxn { left: 4px; top: 201px; width: 455px; height: 506px; padding: 12px 10px 0 13px; }
.win-mol { left: 1650px; top: 227px; width: 453px; height: 686px; padding: 11px 11px 0 11px; }
.win-head { display: flex; align-items: center; justify-content: space-between; height: 21px; background: #9fafb6; padding: 0 4px 0 4px; font-size: 10.500px; font-variant: small-caps; }
.win-mol .win-head { height: 22px; }
.win-head svg { width: 70px; height: 14px; }
.win-rxn .win-body { width: 429px; display: flex; flex-direction: column; align-items: center; }
.win-rxn .win-head { width: 429px; }
.win-rxn .tri, .win-rxn .evaluate, .win-rxn .stats, .win-rxn .ban { position: relative; left: -1px; }
.w-smi { height: 17px; line-height: 17px; font-size: 11.500px; text-align: center; white-space: nowrap; color: #000; }
.win-mol .w-smi { font-size: 11.050px; }
.w-smi.long { font-size: 11.150px; }
.scheme { width: 429px; height: 115px; display: block; }
.tri { display: flex; height: 25px; width: 251px; border-radius: 13px; overflow: hidden; color: #fff; font-size: 9.600px; font-weight: 500; letter-spacing: .9px; }
.tri button { font-size: inherit; font-weight: inherit; letter-spacing: inherit; }
.tri svg { width: 11px; height: 11px; margin-right: 7px; }
.t-sel, .t-del { width: 79px; } .t-col { flex: 1; }
.t-sel { background: #ee7a0e; } .t-del { background: #db1a25; } .t-col { background: #306eba; }
.predicted { margin-top: 11px; border-top: 1px solid #d5d5d5; width: 429px; height: 35px; display: flex; align-items: center; justify-content: center; gap: 4px; font-size: 11.200px; letter-spacing: .33px; }
.predicted em { font-style: normal; font-size: 10px; letter-spacing: .3px; background: #d8dada; border-radius: 12px; height: 23px; line-height: 23px; width: 140px; text-align: center; }
.evaluate { margin-top: 8px; width: 135px; height: 26px; border: 1px solid #333; border-radius: 3px; font-size: 9.600px; font-weight: 500; letter-spacing: .9px; }
.stats { width: 419px; margin-top: 8px; font-size: 9.700px; }
.stats div { display: flex; align-items: center; height: 28px; border-bottom: 1px solid #ddd; padding-left: 11px; }
.stats div:last-child { border: 0; height: 27px; }
.stats dt { width: 135px; font-weight: 500; }
.stats .li { display: list-item; list-style: disc outside; }
.stats a { color: #2c3a92; text-decoration: underline; }
.sbtn { height: 25px; border-radius: 3px; color: #fff; font-size: 9.600px; font-weight: 500; letter-spacing: .9px; box-shadow: 0 1px 1px rgba(0,0,0,.2); }
.ban { width: 45px; background: #c51022; }

.scroller { display: flex; height: 642px; }
.content { width: 422px; display: flex; flex-direction: column; align-items: center; border-right: 1px solid #eee; }
.bar { width: 5px; margin: 3px 0 0 2px; border-radius: 3px 3px 0 0; background: #b3b3b3; }
.search { margin-top: 5px; width: 139px; height: 25px; background: #dfe9f8; border-radius: 3px; color: #2552a4; font-size: 9.600px; font-weight: 500; letter-spacing: .9px; }
.search svg { width: 12px; margin-right: 7px; }
.atoms { width: 422px; height: 116px; }
.w-note { height: 16.700px; line-height: 16.700px; font-size: 9.050px; white-space: nowrap; }
.lo, .hi { font: 7px "DejaVu Sans", sans-serif; color: #cfe8c4; } .hi { color: #1d7a3c; }
.content .tri { margin-top: 10px; }
hr { width: 100%; border: 0; border-top: 1px solid #ccc; margin: 11px 0 6px; }
.srow { display: flex; gap: 6px; margin-bottom: 5.500px; }
.g { width: 97.500px; background: #45a53a; } .o { width: 88.500px; background: #e84122; } .a { width: 112px; background: #3691d5; } .r { width: 216px; background: #2552a4; }
.r svg { width: 10px; margin-right: 7px; }
.prec { display: flex; align-items: center; width: 100%; height: 17px; font-size: 11.200px; color: #555; letter-spacing: .1px; white-space: nowrap; }
.prec b { width: 135px; font-size: 12.500px; color: #000; letter-spacing: 0; }
.prec .gc { width: 138px; }
.tog { position: relative; flex: none; width: 22px; height: 10px; border-radius: 5px; background: #777; margin: 0 5px 0 4px; }
.tog::after { content: ""; position: absolute; left: -5px; top: -2px; width: 14px; height: 14px; border-radius: 50%; background: #fff; box-shadow: 0 1px 2px rgba(0,0,0,.45); }
.tog.on { background: #6c91d0; margin: 0 7px 0 0; } .tog.on::after { left: 12px; background: #2552a4; }
.sort { width: 100%; display: flex; align-items: center; padding: 0 7px 0 6px; justify-content: space-between; margin-top: 5px; height: 28px; }
.select { width: 292px; height: 28px; border: 1px solid #999; border-radius: 3px; display: flex; align-items: center; justify-content: space-between; padding: 0 13px 0 10px; font-size: 10.900px; color: #555; letter-spacing: .2px; }
.select i { border: 3.500px solid transparent; border-top-color: #555; border-bottom: 0; }
.sort button { width: 106px; height: 25px; background: #d8dada; border-radius: 3px; font-size: 9.600px; font-weight: 500; letter-spacing: .9px; }
.sort button svg { width: 11px; margin-left: 6px; }
.prow { width: 100%; display: flex; padding: 6px 0 0 6px; }
.pcard { width: 400px; height: 255px; background: #fff; box-shadow: 0 2px 4px rgba(0,0,0,.3); border-radius: 3px; display: flex; flex-direction: column; align-items: center; padding-top: 5px; }
.pmain { display: flex; width: 100%; }
.pmain svg { width: 208px; height: 214px; }
.pmain dl { width: 186px; font-size: 9.600px; line-height: 14.600px; text-align: center; }
.pmain dl div { display: flex; align-items: center; height: 25.100px; border-bottom: 1px solid #e0e0e0; }
.pmain dl .two { height: 29.500px; }
.pmain dl div:last-child { border: 0; }
.pmain dt { width: 86px; padding: 0 8px; }
.pmain dd { width: 100px; padding: 0 8px; }
.picons { width: 66px; height: 22px; margin-top: 4px; }
.thumb { width: 5px; height: 42px; border-radius: 3px; background: #b3b3b3; margin: -4px 0 0 8px; }
```
